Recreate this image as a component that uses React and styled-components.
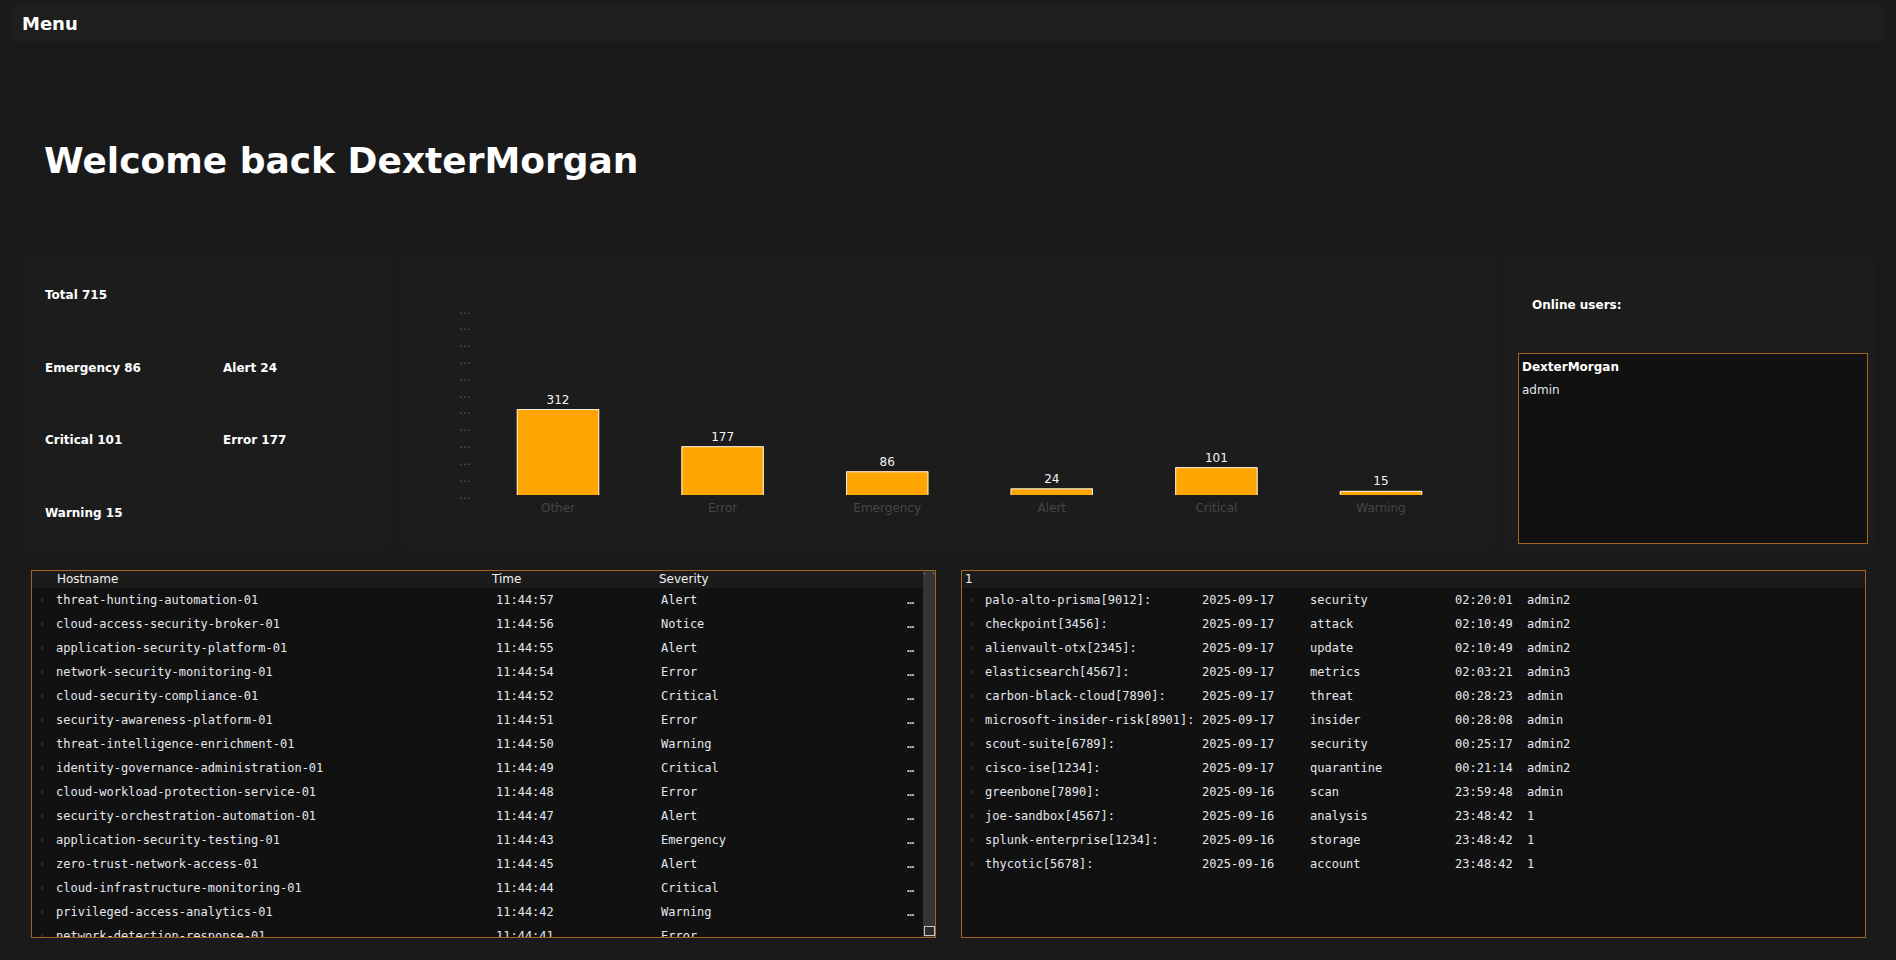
import React from 'react';
import styled, { createGlobalStyle } from 'styled-components';

const GlobalStyle = createGlobalStyle`
  html, body { margin: 0; padding: 0; background: #1a1a1a; }
  body { font-family: "DejaVu Sans", "Noto Sans", sans-serif; color: #fff; }
  * { box-sizing: border-box; }
`;

const Page = styled.div`
  width: 1896px;
  height: 960px;
  overflow: hidden;
  background: #1a1a1a;
  padding-top: 5px;
`;

const MenuBar = styled.nav`
  margin: 0 12px 0 13px;
  height: 37px;
  background: #1e1e1e;
  border-radius: 4px;
  display: flex;
  align-items: center;
  padding-left: 9px;
  font-size: 18px;
  font-weight: 700;
  color: #fff;
`;

const Heading = styled.h1`
  margin: 98px 0 0 44px;
  font-size: 36px;
  line-height: 42px;
  font-weight: 700;
  color: #fff;
`;

const CardRow = styled.section`
  margin-top: 71px;
  padding: 0 21px 0 22px;
  display: grid;
  grid-template-columns: 370px 1095px 373px;
  gap: 8px;
  height: 300px;
`;

const Card = styled.div`
  background: #1c1c1c;
  border-radius: 12px;
  overflow: hidden;
`;

const StatsGrid = styled.div`
  display: grid;
  grid-template-columns: 178px 1fr;
  grid-auto-rows: 72.5px;
  align-items: center;
  padding: 6px 0 0 23px;
`;

const Stat = styled.div`
  font-size: 12px;
  font-weight: 700;
  color: #fff;
  grid-column: ${(p) => (p.$wide ? '1 / -1' : 'auto')};
`;

const UsersCard = styled(Card)`
  display: flex;
  flex-direction: column;
  padding: 0 8px 9px 15px;
`;

const UsersTitle = styled.div`
  height: 100px;
  display: flex;
  align-items: center;
  padding: 3px 0 0 14px;
  font-size: 12px;
  font-weight: 700;
  color: #fff;
`;

const UsersBox = styled.div`
  flex: 1;
  border: 1px solid #a5651f;
  background: #111;
  padding: 5px 3px;
  display: flex;
  flex-direction: column;
  gap: 6px;
`;

const UserName = styled.div`
  font-size: 12px;
  line-height: 17px;
  font-weight: ${(p) => (p.$bold ? 700 : 400)};
  color: ${(p) => (p.$bold ? '#fff' : '#dde4ee')};
`;

const TableRow2 = styled.section`
  margin-top: 17px;
  padding: 0 30px 0 31px;
  display: grid;
  grid-template-columns: 905px 905px;
  gap: 25px;
  height: 368px;
`;

const Frame = styled.div`
  border: 1px solid #a5651f;
  background: #111;
  overflow: hidden;
  height: 368px;
  display: flex;
`;

const Scroller = styled.div`
  flex: 1;
  min-width: 0;
  height: 100%;
  overflow: hidden;
`;

const ScrollTrack = styled.div`
  width: 12px;
  flex: none;
  background: #353535;
  display: flex;
  flex-direction: column;
  justify-content: space-between;
  align-items: center;
  padding: 2px 0 1px;
`;

const ScrollArrow = styled.span`
  width: 10px;
  height: 1px;
  border-left: 1px solid #9a9a9a;
  border-right: 1px solid #9a9a9a;
`;

const ScrollThumbEnd = styled.span`
  width: 11px;
  height: 10px;
  border: 1px solid #c8c8c8;
  background: #2a2a2a;
`;

const HeadRow = styled.div`
  height: 17px;
  background: #1b1b1b;
  display: grid;
  grid-template-columns: ${(p) => p.$cols};
  padding-left: ${(p) => p.$pad}px;
  align-items: center;
  font-size: 12px;
  line-height: 17px;
  color: #f2f2f2;
  white-space: nowrap;
`;

const BodyRow = styled.div`
  height: 24px;
  display: grid;
  grid-template-columns: ${(p) => p.$cols};
  align-items: center;
  font-family: "DejaVu Sans Mono", "Liberation Mono", monospace;
  font-size: 12px;
  color: #e4e8ee;
  white-space: nowrap;
`;

const Caret = styled.span`
  justify-self: start;
  margin-left: 9px;
  width: 0;
  height: 0;
  border-left: 4px solid #262626;
  border-top: 3.5px solid transparent;
  border-bottom: 3.5px solid transparent;
`;

const Cell = styled.span`
  overflow: hidden;
`;

const LEFT_COLS = '24px 440px 165px 246px 1fr';
const LEFT_HEAD = '435px 167px 1fr';
const RIGHT_COLS = '23px 217px 108px 145px 72px 1fr';

const events = [
  ['threat-hunting-automation-01', '11:44:57', 'Alert'],
  ['cloud-access-security-broker-01', '11:44:56', 'Notice'],
  ['application-security-platform-01', '11:44:55', 'Alert'],
  ['network-security-monitoring-01', '11:44:54', 'Error'],
  ['cloud-security-compliance-01', '11:44:52', 'Critical'],
  ['security-awareness-platform-01', '11:44:51', 'Error'],
  ['threat-intelligence-enrichment-01', '11:44:50', 'Warning'],
  ['identity-governance-administration-01', '11:44:49', 'Critical'],
  ['cloud-workload-protection-service-01', '11:44:48', 'Error'],
  ['security-orchestration-automation-01', '11:44:47', 'Alert'],
  ['application-security-testing-01', '11:44:43', 'Emergency'],
  ['zero-trust-network-access-01', '11:44:45', 'Alert'],
  ['cloud-infrastructure-monitoring-01', '11:44:44', 'Critical'],
  ['privileged-access-analytics-01', '11:44:42', 'Warning'],
  ['network-detection-response-01', '11:44:41', 'Error'],
];

const logs = [
  ['palo-alto-prisma[9012]:', '2025-09-17', 'security', '02:20:01', 'admin2'],
  ['checkpoint[3456]:', '2025-09-17', 'attack', '02:10:49', 'admin2'],
  ['alienvault-otx[2345]:', '2025-09-17', 'update', '02:10:49', 'admin2'],
  ['elasticsearch[4567]:', '2025-09-17', 'metrics', '02:03:21', 'admin3'],
  ['carbon-black-cloud[7890]:', '2025-09-17', 'threat', '00:28:23', 'admin'],
  ['microsoft-insider-risk[8901]:', '2025-09-17', 'insider', '00:28:08', 'admin'],
  ['scout-suite[6789]:', '2025-09-17', 'security', '00:25:17', 'admin2'],
  ['cisco-ise[1234]:', '2025-09-17', 'quarantine', '00:21:14', 'admin2'],
  ['greenbone[7890]:', '2025-09-16', 'scan', '23:59:48', 'admin'],
  ['joe-sandbox[4567]:', '2025-09-16', 'analysis', '23:48:42', '1'],
  ['splunk-enterprise[1234]:', '2025-09-16', 'storage', '23:48:42', '1'],
  ['thycotic[5678]:', '2025-09-16', 'account', '23:48:42', '1'],
];

const bars = [
  ['Other', 312],
  ['Error', 177],
  ['Emergency', 86],
  ['Alert', 24],
  ['Critical', 101],
  ['Warning', 15],
];

const ChartSvg = styled.svg`
  display: block;
  font-family: "DejaVu Sans", sans-serif;
`;

function BarChart() {
  const base = 242;
  const scale = 86 / 312;
  const left = 75.7;
  const band = 164.6;
  const bw = 82.4;
  const ticks = Array.from({ length: 12 }, (_, i) => 60 + i * 16.82);
  return (
    <ChartSvg width="1095" height="300" viewBox="0 0 1095 300">
      {ticks.map((y, i) => (
        <text key={i} x="71" y={y + 0.5} fontSize="12" fill="#5a5a5a" textAnchor="end">…</text>
      ))}
      {bars.map(([label, v], i) => {
        const cx = left + band * i + band / 2;
        const h = v * scale;
        const x0 = cx - bw / 2;
        const top = base - h;
        return (
          <g key={label}>
            <rect x={x0} y={top} width={bw} height={h} fill="#FFA500" />
            <path
              d={`M${x0 + 0.5} ${base} V${top + 0.5} H${x0 + bw - 0.5} V${base}`}
              fill="none"
              stroke="#eeeeee"
              strokeWidth="1"
            />
            <text x={cx} y={top - 5.5} fontSize="12" fill="#f4f4f4" textAnchor="middle">{v}</text>
            <text x={cx} y={259} fontSize="12" fill="#464646" textAnchor="middle">{label}</text>
          </g>
        );
      })}
    </ChartSvg>
  );
}

export default function App() {
  return (
    <Page>
      <GlobalStyle />
      <MenuBar>Menu</MenuBar>
      <Heading>Welcome back DexterMorgan</Heading>
      <CardRow>
        <Card>
          <StatsGrid>
            <Stat $wide>Total 715</Stat>
            <Stat>Emergency 86</Stat>
            <Stat>Alert 24</Stat>
            <Stat>Critical 101</Stat>
            <Stat>Error 177</Stat>
            <Stat $wide>Warning 15</Stat>
          </StatsGrid>
        </Card>
        <Card>
          <BarChart />
        </Card>
        <UsersCard>
          <UsersTitle>Online users:</UsersTitle>
          <UsersBox>
            <UserName $bold>DexterMorgan</UserName>
            <UserName>admin</UserName>
          </UsersBox>
        </UsersCard>
      </CardRow>
      <TableRow2>
        <Frame>
          <Scroller>
            <HeadRow $cols={LEFT_HEAD} $pad={25}>
              <span>Hostname</span>
              <span>Time</span>
              <span>Severity</span>
            </HeadRow>
            {events.map(([host, time, sev], i) => (
              <BodyRow key={i} $cols={LEFT_COLS}>
                <Caret />
                <Cell>{host}</Cell>
                <Cell>{time}</Cell>
                <Cell>{sev}</Cell>
                <Cell>…</Cell>
              </BodyRow>
            ))}
          </Scroller>
          <ScrollTrack>
            <ScrollArrow />
            <ScrollThumbEnd />
          </ScrollTrack>
        </Frame>
        <Frame>
          <Scroller>
            <HeadRow $cols="1fr" $pad={3}>
              <span>1</span>
            </HeadRow>
            {logs.map((r, i) => (
              <BodyRow key={i} $cols={RIGHT_COLS}>
                <Caret />
                {r.map((c, j) => (
                  <Cell key={j}>{c}</Cell>
                ))}
              </BodyRow>
            ))}
          </Scroller>
        </Frame>
      </TableRow2>
    </Page>
  );
}
